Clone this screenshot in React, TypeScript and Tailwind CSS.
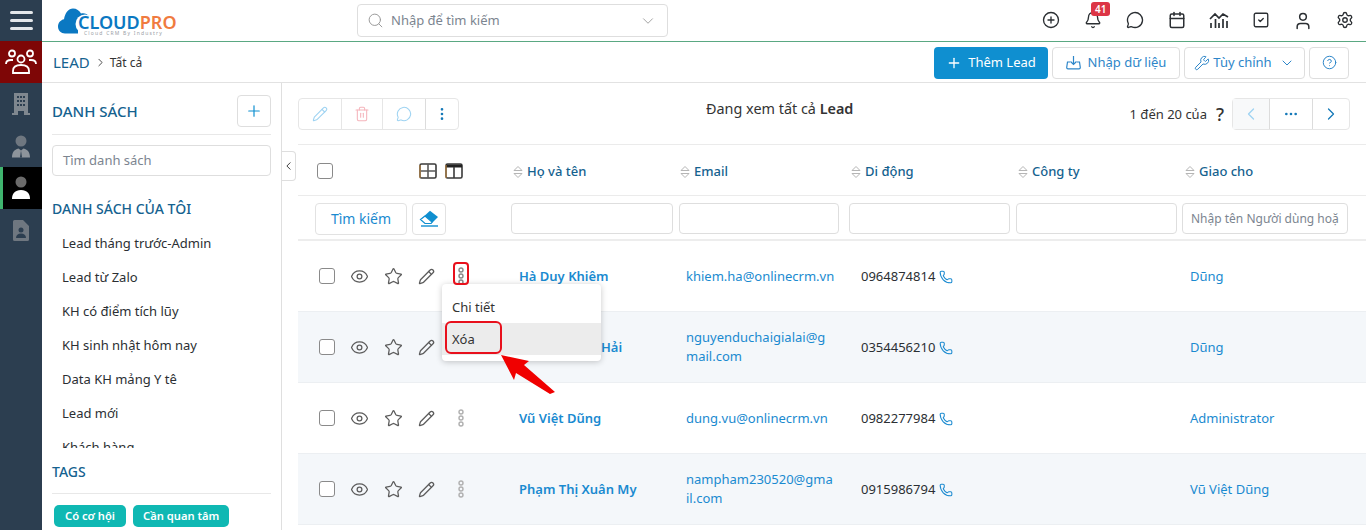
import {
  Bell,
  Calendar,
  ChevronDown,
  ChevronLeft,
  ChevronRight,
  CircleHelp,
  CirclePlus,
  Ellipsis,
  EllipsisVertical,
  Eye,
  MessageCircle,
  Pencil,
  Phone,
  Plus,
  Search,
  Settings,
  SquareCheck,
  Star,
  Trash2,
  User,
  Wrench,
} from "lucide-react";

const lists = [
  "Lead tháng trước-Admin",
  "Lead từ Zalo",
  "KH có điểm tích lũy",
  "KH sinh nhật hôm nay",
  "Data KH mảng Y tê",
  "Lead mới",
  "Khách hàng",
];

const rows = [
  { name: "Hà Duy Khiêm", email: ["khiem.ha@onlinecrm.vn"], phone: "0964874814", owner: "Dũng", alt: false },
  { name: "Nguyễn Đức Hải", email: ["nguyenduchaigialai@g", "mail.com"], phone: "0354456210", owner: "Dũng", alt: true },
  { name: "Vũ Việt Dũng", email: ["dung.vu@onlinecrm.vn"], phone: "0982277984", owner: "Administrator", alt: false },
  { name: "Phạm Thị Xuân My", email: ["nampham230520@gma", "il.com"], phone: "0915986794", owner: "Vũ Việt Dũng", alt: true },
];

const columns = [
  { label: "Họ và tên", cls: "pl-[4px]" },
  { label: "Email", cls: "pl-[3px]" },
  { label: "Di động", cls: "pl-[4px]" },
  { label: "Công ty", cls: "pl-[4px]" },
  { label: "Giao cho", cls: "pl-[5px]" },
];

function SortIcon() {
  return (
    <svg width="10" height="14" viewBox="0 0 10 14" fill="none" stroke="#b5b5b5" strokeWidth="1">
      <path d="M1 5.500 5 1.500l4 4zM1 8.500l4 4 4-4z" />
    </svg>
  );
}

function DotsIcon({ color }: { color: string }) {
  return (
    <svg width="8" height="18" viewBox="0 0 8 18" fill="none" stroke={color} strokeWidth="1.400">
      <circle cx="4" cy="3" r="2" />
      <circle cx="4" cy="9" r="2" />
      <circle cx="4" cy="15" r="2" />
    </svg>
  );
}

function LogoCloud() {
  return (
    <svg width="36" height="26" viewBox="0 0 36 26">
      <path
        d="M7 25.500C3 25.500 0 22.500 0 18.500c0-3.600 2.500-6.500 6-7.200C7 5 10.500.5 15 .5c3.500 0 6.500 2 8 5 3-.8 6 0 8 3v5H20v12z"
        fill="#0b78c2"
      />
      <circle cx="27" cy="16" r="9.500" fill="#fff" />
      <rect x="27" y="9" width="9" height="17" fill="#fff" />
    </svg>
  );
}

function TableViewIcon({ split }: { split?: boolean }) {
  return (
    <svg width="18" height="16" viewBox="0 0 18 16" fill="none" strokeWidth="1.600">
      <rect x="1" y="1" width="16" height="14" rx="1.500" stroke="#3a3a3a" />
      {split ? (
        <>
          <path d="M1 3h16" stroke="#222" strokeWidth="3" />
          <path d="M9 4v11" stroke="#3a3a3a" />
        </>
      ) : (
        <path d="M9 1v14M1 8h16" stroke="#5a5a5a" />
      )}
      <path d="M1 2v13" stroke="#c98b3c" strokeWidth="1" />
    </svg>
  );
}

function Rail() {
  return (
    <div className="flex w-[42px] shrink-0 flex-col bg-[#2c3e50]">
      <div className="flex h-[41px] flex-col items-center justify-center gap-[5px]">
        <div className="h-[3px] w-[23px] rounded-full bg-[#e4e7ea]" />
        <div className="h-[3px] w-[23px] rounded-full bg-[#e4e7ea]" />
        <div className="h-[3px] w-[23px] rounded-full bg-[#e4e7ea]" />
      </div>
      <div className="flex h-[42px] items-center justify-center bg-[#7e0606]">
        <svg width="32" height="26" viewBox="0 0 32 26" fill="none" stroke="#fff" strokeWidth="1.800">
          <circle cx="7" cy="4.500" r="3" />
          <circle cx="25" cy="4.500" r="3" />
          <circle cx="16" cy="10" r="3.500" />
          <path d="M1 15c0-3 2-4 5-4h2M31 15c0-3-2-4-5-4h-2" />
          <path d="M8 24v-2c0-4 3-6 8-6s8 2 8 6v2z" />
        </svg>
      </div>
      <div className="flex h-[42px] items-center justify-center">
        <svg width="18" height="22" viewBox="0 0 18 22">
          <path d="M2 0h14v20h2v2h-6v-4H6v4H0v-2h2z" fill="#7f878f" />
          <g fill="#2c3e50">
            <rect x="5" y="3" width="2" height="2" />
            <rect x="8" y="3" width="2" height="2" />
            <rect x="11" y="3" width="2" height="2" />
            <rect x="5" y="7" width="2" height="2" />
            <rect x="8" y="7" width="2" height="2" />
            <rect x="11" y="7" width="2" height="2" />
            <rect x="5" y="11" width="2" height="2" />
            <rect x="8" y="11" width="2" height="2" />
            <rect x="11" y="11" width="2" height="2" />
          </g>
        </svg>
      </div>
      <div className="flex h-[42px] items-center justify-center">
        <svg width="20" height="23" viewBox="0 0 20 23">
          <circle cx="10" cy="6" r="5.500" fill="#6f7780" />
          <path d="M1 22.500c0-5 2-8 6.500-9l2.500 2 2.500-2c4.500 1 6.500 4 6.500 9z" fill="#8d949b" />
          <path d="M10 15.500 9 22.500h2z" fill="#2c3e50" />
        </svg>
      </div>
      <div className="flex h-[42px] items-center justify-center border-l-[3px] border-[#3fb56f] bg-black pr-[3px]">
        <svg width="20" height="24" viewBox="0 0 20 24">
          <circle cx="10" cy="6" r="5.500" fill="#6b6b6b" />
          <path d="M1 23c0-5.500 3-9 9-9s9 3.500 9 9z" fill="#fff" />
        </svg>
      </div>
      <div className="flex h-[42px] items-center justify-center">
        <svg width="16" height="21" viewBox="0 0 16 21">
          <path d="M1.500 0H10l6 6v13.500a1.500 1.500 0 0 1-1.500 1.500h-13A1.500 1.500 0 0 1 0 19.500v-18A1.500 1.500 0 0 1 1.500 0z" fill="#6f7780" />
          <circle cx="8" cy="10" r="2.500" fill="#2c3e50" />
          <path d="M3 18c0-3 2-4.500 5-4.500s5 1.500 5 4.500z" fill="#2c3e50" />
        </svg>
      </div>
    </div>
  );
}

function TopBar() {
  return (
    <div className="flex h-[42px] shrink-0 items-center border-b border-[#5aa882] bg-white">
      <div className="ml-[16px] flex w-[299px] items-center">
        <LogoCloud />
        <div className="relative mt-[8px] -ml-[16px] flex flex-col items-start">
          <div className="text-[18px] leading-[18px] font-semibold">
            <span className="text-[#0b78c2]">CLOUD</span>
            <span className="text-[#f07b3f]">PRO</span>
          </div>
          <div className="ml-[6px] text-[5px] leading-[5px] tracking-[1.200px] whitespace-nowrap text-[#9aa0a6]">
            Cloud CRM By Industry
          </div>
        </div>
      </div>
      <div className="flex h-[33px] w-[311px] items-center rounded border border-[#dedede] pr-[10px] pl-[9px]">
        <Search size={17} strokeWidth={1.4} className="text-[#9a9a9a]" />
        <span className="ml-[7px] flex-1 pt-[1px] text-[13px] text-[#7c8590]">Nhập để tìm kiếm</span>
        <ChevronDown size={18} strokeWidth={1.2} className="text-[#9a9a9a]" />
      </div>
      <div className="ml-[362px] grid grid-cols-[repeat(8,42px)] justify-items-center text-[#2b2f33]">
        <CirclePlus size={18} strokeWidth={1.8} />
        <div className="relative">
          <Bell size={18} strokeWidth={1.8} />
          <span className="absolute -top-[9px] left-[7px] rounded-[3px] bg-[#dc3545] px-[4px] text-[10px] leading-[14px] font-semibold text-white">
            41
          </span>
        </div>
        <MessageCircle size={18} strokeWidth={1.8} />
        <Calendar size={18} strokeWidth={2} />
        <svg width="20" height="18" viewBox="0 0 20 18" fill="none" stroke="currentColor" strokeWidth="1.700">
          <path d="M1 8l5-5 4 4 4-4 5 3" />
          <path d="M2 17v-5M6.500 17V8M10 17v-5M14 17V8M18 17v-7" />
        </svg>
        <SquareCheck size={18} strokeWidth={1.8} />
        <User size={20} strokeWidth={1.8} />
        <Settings size={18} strokeWidth={1.8} />
      </div>
    </div>
  );
}

function BreadcrumbBar() {
  return (
    <div className="flex h-[41px] shrink-0 items-center border-b border-[#e2e2e2] bg-white">
      <span className="ml-[11px] pt-[1px] text-[15px] text-[#15628f]">LEAD</span>
      <ChevronRight size={13} strokeWidth={1.6} className="mr-[3px] ml-[4px] text-[#333]" />
      <span className="pt-[1px] text-[12px] text-[#333]">Tất cả</span>
      <div className="mr-[17px] ml-auto flex items-center gap-[4px] pt-[1px] text-[13px]">
        <button className="flex h-[32px] w-[114px] items-center justify-center gap-[6px] rounded bg-[#0f8fd0] text-white">
          <Plus size={16} strokeWidth={2} />
          Thêm Lead
        </button>
        <button className="flex h-[32px] w-[128px] items-center justify-center gap-[7px] rounded border border-[#dedede] text-[#2d86c9]">
          <svg width="15" height="15" viewBox="0 0 15 15" fill="none" stroke="currentColor" strokeWidth="1.200">
            <path d="M7.500 1v8M4.500 6.500l3 3 3-3" />
            <path d="M4 7H1.500L.7 12.500c0 .8.500 1.300 1.300 1.300h11c.8 0 1.300-.5 1.300-1.300L13.500 7H11" />
          </svg>
          Nhập dữ liệu
        </button>
        <button className="flex h-[32px] w-[121px] items-center justify-center gap-[3px] rounded border border-[#dedede] text-[#2d86c9]">
          <Wrench size={16} strokeWidth={1.5} />
          Tùy chỉnh
          <ChevronDown size={16} strokeWidth={1.5} className="ml-[4px]" />
        </button>
        <button className="flex h-[32px] w-[40px] items-center justify-center rounded border border-[#dedede] text-[#2d86c9]">
          <CircleHelp size={15} strokeWidth={1.6} />
        </button>
      </div>
    </div>
  );
}

function Sidebar() {
  return (
    <div className="flex w-[240px] shrink-0 flex-col overflow-hidden border-r border-[#dfdfdf] pr-[10px] pl-[10px]">
      <div className="flex h-[52px] shrink-0 items-end justify-between border-b border-[#e8e8e8] pb-[7px]">
        <span className="mb-[6px] text-[15px] leading-[20px] font-medium text-[#15628f]">DANH SÁCH</span>
        <button className="flex h-[32px] w-[34px] items-center justify-center rounded border border-[#dedede] text-[#0f8fd0]">
          <Plus size={18} strokeWidth={1.6} />
        </button>
      </div>
      <div className="mt-[10px] flex h-[31px] shrink-0 items-center rounded border border-[#dedede] pt-[1px] pl-[10px] text-[13px] text-[#7c8590]">
        Tìm danh sách
      </div>
      <div className="mt-[23px] shrink-0 text-[14px] leading-[20px] font-medium text-[#15628f]">DANH SÁCH CỦA TÔI</div>
      <div className="mt-[8px] h-[221px] shrink-0 overflow-hidden">
        {lists.map((item) => (
          <div key={item} className="flex h-[34px] items-center pl-[10px] text-[13px] text-[#2b2f33]">
            {item}
          </div>
        ))}
      </div>
      <div className="mt-[14px] shrink-0 border-b border-[#e8e8e8] pb-[11px] text-[14px] leading-[20px] font-medium text-[#15628f]">
        TAGS
      </div>
      <div className="mt-[11px] flex shrink-0 gap-[7px] pl-[2px]">
        <span className="rounded-[5px] bg-[#0fb8b3] px-[11px] text-[11.200px] leading-[22px] font-semibold text-white">Có cơ hội</span>
        <span className="rounded-[5px] bg-[#0fb8b3] px-[10px] text-[11.200px] leading-[22px] font-semibold text-white">Cần quan tâm</span>
      </div>
    </div>
  );
}

function Toolbar() {
  return (
    <div className="flex h-[61px] shrink-0 items-start pt-[15px]">
      <div className="flex h-[32px] w-[161px] rounded border border-[#e6e6e6]">
        <div className="flex w-[43px] items-center justify-center border-r border-[#e6e6e6] text-[#9ed3f2]">
          <Pencil size={16} strokeWidth={1.6} />
        </div>
        <div className="flex w-[41px] items-center justify-center border-r border-[#e6e6e6] text-[#f5b5bc]">
          <Trash2 size={16} strokeWidth={1.6} />
        </div>
        <div className="flex w-[43px] items-center justify-center border-r border-[#dcdcdc] text-[#9ed3f2]">
          <MessageCircle size={16} strokeWidth={1.6} />
        </div>
        <div className="flex flex-1 items-center justify-center text-[#1579b8]">
          <EllipsisVertical size={16} strokeWidth={2} />
        </div>
      </div>
      <div className="ml-[247px] text-[14.400px] leading-[22px] text-[#333]">
        Đang xem tất cả <span className="font-semibold">Lead</span>
      </div>
      <div className="mr-[16px] ml-auto flex items-center">
        <span className="pt-[1px] text-[13px] text-[#333]">1 đến 20 của</span>
        <span className="mr-[8px] ml-[9px] text-[18px] leading-[24px] font-medium text-[#333]">?</span>
        <div className="flex h-[32px] w-[118px] rounded border border-[#e6e6e6]">
          <div className="flex w-[37px] items-center justify-center border-r border-[#dcdcdc] bg-[#f8f9fa] text-[#9ed3f2]">
            <ChevronLeft size={20} strokeWidth={1.5} />
          </div>
          <div className="flex w-[43px] items-center justify-center border-r border-[#dcdcdc] text-[#1579b8]">
            <Ellipsis size={16} strokeWidth={2} />
          </div>
          <div className="flex flex-1 items-center justify-center text-[#1579b8]">
            <ChevronRight size={20} strokeWidth={1.5} />
          </div>
        </div>
      </div>
    </div>
  );
}

function HeaderRows() {
  return (
    <>
      <div className="grid h-[52px] shrink-0 grid-cols-[211px_168px_170px_167px_166px_1fr] items-center border-y border-[#ebebeb] pt-[2px]">
        <div className="flex items-center pl-[19px]">
          <div className="h-[16px] w-[16px] rounded-[3px] border border-[#8a8a8a]" />
          <div className="ml-[86px] flex items-center gap-[8px]">
            <TableViewIcon />
            <TableViewIcon split />
          </div>
        </div>
        {columns.map((c) => (
          <div key={c.label} className={`flex items-center gap-[4px] pt-[2px] text-[13px] font-medium text-[#15628f] ${c.cls}`}>
            <SortIcon />
            {c.label}
          </div>
        ))}
      </div>
      <div className="grid h-[45px] shrink-0 grid-cols-[211px_168px_170px_167px_166px_1fr] items-center border-b-[2px] border-[#ededed] pt-[2px]">
        <div className="flex items-center gap-[5px] pl-[17px]">
          <button className="flex h-[32px] w-[92px] items-center justify-center rounded border border-[#e2e2e2] text-[14px] text-[#1a8ad0]">
            Tìm kiếm
          </button>
          <button className="flex h-[32px] w-[34px] items-center justify-center rounded border border-[#e2e2e2]">
            <svg width="20" height="17" viewBox="0 0 20 17">
              <path d="M11 .8 19 7l-6.500 6.500H7L1.500 9.500z" fill="#0f8fd0" />
              <path d="M1.500 9.500 6 6l7 6-1 1.500H6z" fill="#fff" stroke="#0f8fd0" strokeWidth="1.200" />
              <path d="M2 16h17" stroke="#0f8fd0" strokeWidth="1.400" />
            </svg>
          </button>
        </div>
        <div className="pl-[2px]">
          <div className="h-[31px] w-[162px] rounded border border-[#dedede]" />
        </div>
        <div className="pl-[2px]">
          <div className="h-[31px] w-[160px] rounded border border-[#dedede]" />
        </div>
        <div className="pl-[2px]">
          <div className="h-[31px] w-[161px] rounded border border-[#dedede]" />
        </div>
        <div className="pl-[2px]">
          <div className="h-[31px] w-[161px] rounded border border-[#dedede]" />
        </div>
        <div className="pl-[2px]">
          <div className="flex h-[31px] w-[166px] items-center rounded border border-[#dedede] px-[8px] text-[12px] text-[#7c8590]">
            <span className="block overflow-hidden whitespace-nowrap">Nhập tên Người dùng hoặc</span>
          </div>
        </div>
      </div>
    </>
  );
}

function LeadRow({ row, index }: { row: (typeof rows)[number]; index: number }) {
  return (
    <div
      className={`grid h-[71px] shrink-0 grid-cols-[211px_168px_170px_167px_166px_1fr] items-center border-b border-[#eceff2] text-[13px] ${
        row.alt ? "bg-[#f4f7fa]" : "bg-white"
      }`}
    >
      <div className="flex items-center pl-[21px] text-[#5c5c5c]">
        <div className="h-[16px] w-[16px] rounded-[3px] border border-[#8a8a8a] bg-white" />
        <Eye size={19} strokeWidth={1.6} className="ml-[15px]" />
        <Star size={19} strokeWidth={1.6} className="ml-[15px]" />
        <Pencil size={17} strokeWidth={1.8} className="ml-[15px]" />
        <div className="ml-[22px]">
          <DotsIcon color={index === 0 ? "#888" : "#b0b0b0"} />
        </div>
      </div>
      <div className="-ml-[2px] pt-[2px] pl-[12px] font-semibold whitespace-nowrap text-[#1a8ad0]">{row.name}</div>
      <div className="pl-[9px] leading-[19px] text-[#1a8ad0]">
        {row.email.map((line) => (
          <div key={line}>{line}</div>
        ))}
      </div>
      <div className="flex items-center gap-[4px] pt-[1px] pl-[14px] text-[#2b2f33]">
        {row.phone}
        <Phone size={14} strokeWidth={1.8} className="text-[#1a8ad0]" />
      </div>
      <div />
      <div className="pt-[2px] pl-[10px] text-[#1a8ad0]">{row.owner}</div>
    </div>
  );
}

export default function App() {
  return (
    <div className="relative flex h-[530px] w-[1366px] overflow-hidden bg-white font-['Noto_Sans','Open_Sans',sans-serif]">
      <Rail />
      <div className="flex min-w-0 flex-1 flex-col">
        <TopBar />
        <BreadcrumbBar />
        <div className="flex min-h-0 flex-1">
          <Sidebar />
          <div className="relative min-w-0 flex-1 pl-[16px]">
            <button className="absolute top-[68px] left-0 flex h-[30px] w-[14px] items-center justify-center rounded-r border border-l-0 border-[#dedede] bg-white text-[#222]">
              <ChevronLeft size={16} strokeWidth={1.6} />
            </button>
            <div className="flex h-full flex-col overflow-hidden">
              <Toolbar />
              <HeaderRows />
              {rows.map((row, i) => (
                <LeadRow key={row.name} row={row} index={i} />
              ))}
            </div>
          </div>
        </div>
      </div>

      {/* action menu and the annotations drawn over the screenshot */}
      <div className="absolute top-[284px] left-[442px] w-[159px] rounded-[4px] bg-white pt-[7px] pb-[6px] text-[13px] text-[#333] shadow-[0_1px_6px_rgba(0,0,0,0.22)]">
        <div className="flex h-[32px] items-center pt-[1px] pl-[10px]">Chi tiết</div>
        <div className="flex h-[32px] items-center bg-[#ececec] pt-[1px] pl-[10px]">Xóa</div>
      </div>
      <div className="absolute top-[262px] left-[453px] h-[23px] w-[16px] rounded-[4px] border-2 border-[#e8101c]" />
      <div className="absolute top-[321px] left-[445px] h-[33px] w-[57px] rounded-[6px] border-2 border-[#e8101c]" />
      <svg className="absolute top-[350px] left-[498px]" width="60" height="46" viewBox="0 0 60 46">
        <path d="M3 5 31 11 26 15 57 42 52 44 18 23 16 30z" fill="#f00000" />
      </svg>
    </div>
  );
}
